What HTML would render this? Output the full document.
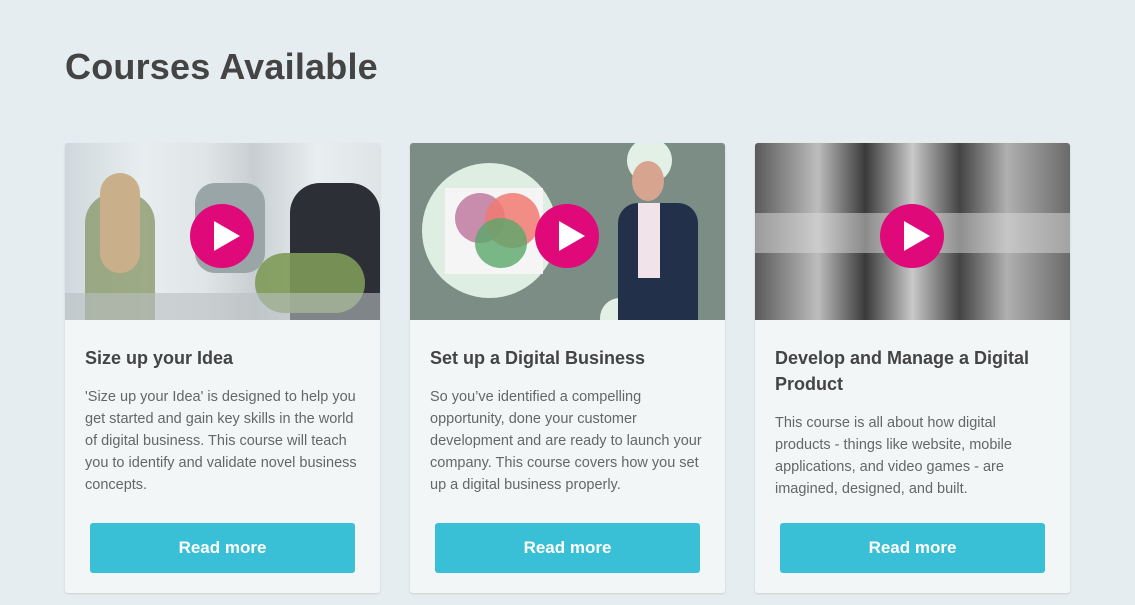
<!DOCTYPE html>
<html><head><meta charset="utf-8"><style>
*{margin:0;padding:0;box-sizing:border-box}
body{width:1135px;height:605px;background:#e5edf0;font-family:"Liberation Sans",sans-serif;overflow:hidden;position:relative}
h1{position:absolute;left:65px;top:46px;font-size:36px;font-weight:bold;color:#444;letter-spacing:0.2px}
.card{position:absolute;top:143px;width:315px;height:450px;background:#f2f6f7;border-radius:3px;box-shadow:0 1px 2px rgba(0,0,0,.12);overflow:hidden}
.img{position:relative;height:177px;overflow:hidden}
.play{position:absolute;left:125px;top:61px;width:64px;height:64px;border-radius:50%;background:#e0097a}
.play:after{content:"";position:absolute;left:24px;top:17px;border-left:26px solid #fff;border-top:15px solid transparent;border-bottom:15px solid transparent}
.t{position:absolute;left:20px;top:202px;width:280px;font-size:18px;font-weight:bold;color:#444;line-height:26px}
.d{position:absolute;left:20px;width:276px;font-size:14.5px;color:#666;line-height:22px}
.btn{position:absolute;left:25px;top:380px;width:265px;height:50px;background:#39bfd6;border-radius:3px;color:#fff;font-weight:bold;font-size:17px;text-align:center;line-height:50px}
</style></head><body>
<h1>Courses Available</h1>

<div class="card" style="left:65px">
<div class="img" style="background:linear-gradient(90deg,#cfd8dc 0%,#e8eef0 25%,#dfe5e6 45%,#c8cfd2 60%,#e9eef0 80%,#dfe4e6 100%)">
<div style="position:absolute;left:20px;top:50px;width:70px;height:127px;background:#8a9a6c;border-radius:30px 30px 0 0;opacity:.8"></div>
<div style="position:absolute;left:35px;top:30px;width:40px;height:100px;background:#c9b08a;border-radius:20px"></div>
<div style="position:absolute;left:130px;top:40px;width:70px;height:90px;background:#9aa5a8;border-radius:20px"></div>
<div style="position:absolute;left:225px;top:40px;width:90px;height:137px;background:#2c2f35;border-radius:30px 30px 0 0"></div>
<div style="position:absolute;left:190px;top:110px;width:110px;height:60px;background:#7e9a58;border-radius:30px;opacity:.9"></div>
<div style="position:absolute;left:0;top:150px;width:315px;height:27px;background:#b9c0c2;opacity:.6"></div>
<div class="play"></div></div>
<div class="t">Size up your Idea</div>
<div class="d" style="top:243px">'Size up your Idea' is designed to help you get started and gain key skills in the world of digital business. This course will teach you to identify and validate novel business concepts.</div>
<div class="btn">Read more</div></div>

<div class="card" style="left:410px">
<div class="img" style="background:#7c8d86">
<div style="position:absolute;left:12px;top:20px;width:135px;height:135px;border-radius:50%;background:#dfeee2"></div>
<div style="position:absolute;left:35px;top:45px;width:98px;height:86px;background:#f5f5f5"></div>
<div style="position:absolute;left:45px;top:50px;width:50px;height:50px;border-radius:50%;background:#c07aa0;opacity:.85"></div>
<div style="position:absolute;left:75px;top:50px;width:55px;height:55px;border-radius:50%;background:#f07a70;opacity:.85"></div>
<div style="position:absolute;left:65px;top:75px;width:52px;height:50px;border-radius:50%;background:#5aa86a;opacity:.8"></div>
<div style="position:absolute;left:217px;top:-5px;width:45px;height:45px;border-radius:50%;background:#e3f0e6"></div>
<div style="position:absolute;left:190px;top:155px;width:40px;height:40px;border-radius:50%;background:#e3f0e6"></div>
<div style="position:absolute;left:208px;top:60px;width:80px;height:117px;background:#23304a;border-radius:20px 20px 0 0"></div>
<div style="position:absolute;left:228px;top:60px;width:22px;height:75px;background:#f0e4ea"></div>
<div style="position:absolute;left:222px;top:18px;width:32px;height:40px;border-radius:50%;background:#d7a58f"></div>
<div class="play"></div></div>
<div class="t">Set up a Digital Business</div>
<div class="d" style="top:243px">So you’ve identified a compelling opportunity, done your customer development and are ready to launch your company. This course covers how you set up a digital business properly.</div>
<div class="btn">Read more</div></div>

<div class="card" style="left:755px">
<div class="img" style="background:linear-gradient(90deg,#5a5a5a,#bdbdbd 20%,#3a3a3a 35%,#c9c9c9 50%,#444 65%,#b0b0b0 80%,#6a6a6a)">
<div style="position:absolute;left:0;top:70px;width:315px;height:40px;background:rgba(220,220,220,.5)"></div>
<div class="play"></div></div>
<div class="t">Develop and Manage a Digital Product</div>
<div class="d" style="top:269px">This course is all about how digital products - things like website, mobile applications, and video games - are imagined, designed, and built.</div>
<div class="btn">Read more</div></div>
</body></html>
